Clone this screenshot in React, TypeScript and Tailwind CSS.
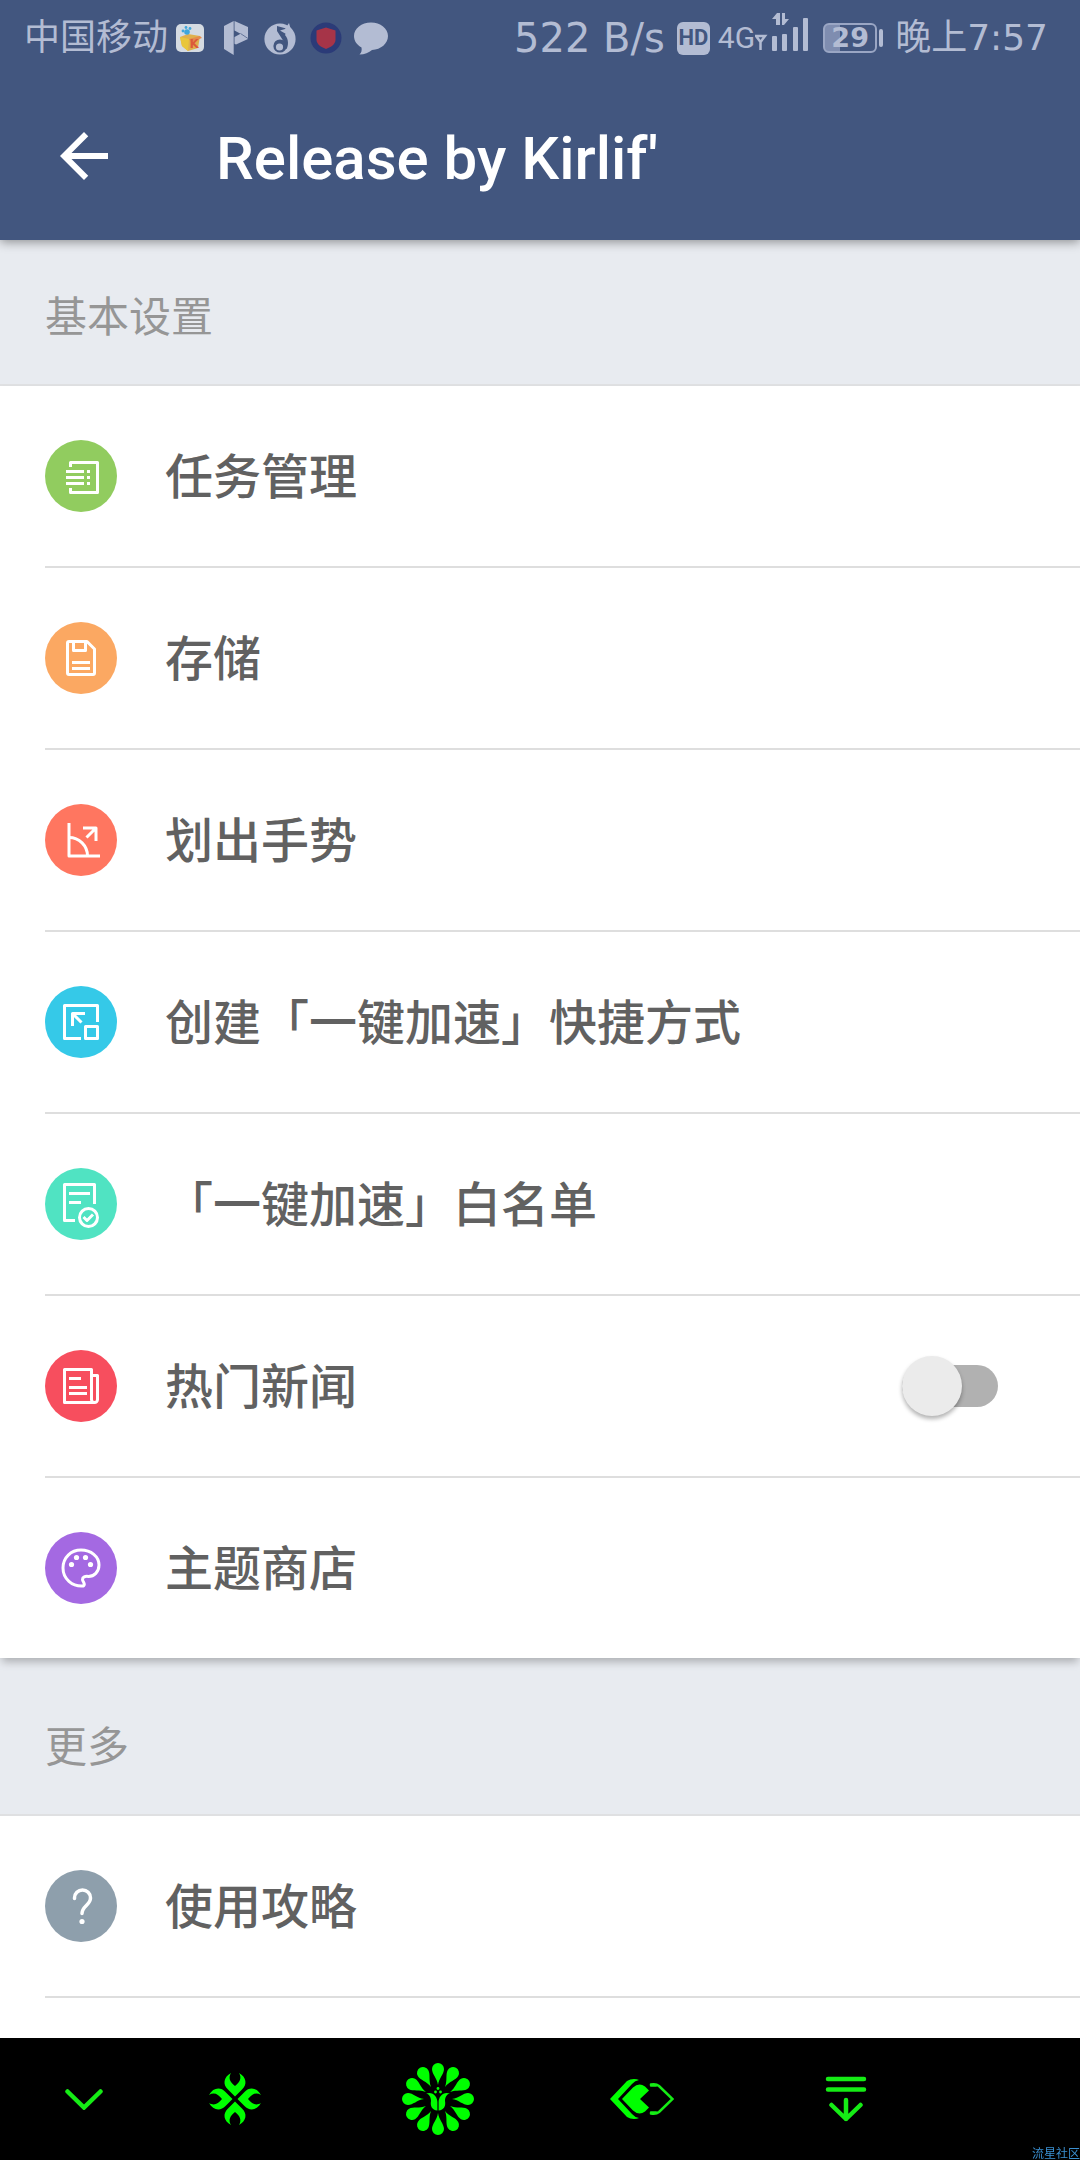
import clsx from 'clsx';
import { ReactNode, useState } from 'react';

type SettingItem = {
  id: string;
  name: string;
  color: string;
  icon: ReactNode;
  toggle?: boolean;
};

const basicItems: SettingItem[] = [
  {
    id: 'tasks',
    name: '任务管理',
    color: 'bg-[#91cc5f]',
    icon: (
      <>
        <path d="M25.5 27V22.5H52.5V52.5H25.5V48" />
        <path d="M21 31.5H39M21 37.5H39M21 43.5H39" />
        <path d="M42 31.5h3M42 37.5h3M42 43.5h3" />
      </>
    ),
  },
  {
    id: 'storage',
    name: '存储',
    color: 'bg-[#fba862]',
    icon: (
      <>
        <path d="M24 19.5H42L49.5 27V51a1.5 1.5 0 0 1-1.5 1.5H24a1.5 1.5 0 0 1-1.5-1.5V21a1.5 1.5 0 0 1 1.5-1.5Z" />
        <path d="M28.5 19.5V28.5H40.5V19.5" />
        <path d="M27 40.5H45M27 46.5H45" />
      </>
    ),
  },
  {
    id: 'gesture',
    name: '划出手势',
    color: 'bg-[#ff7660]',
    icon: (
      <>
        <path d="M24 19V52H55" />
        <path d="M24 33.5A18.5 18.5 0 0 1 42.5 52" />
        <path d="M38 24H51V37M51 24L41.5 33.5" />
      </>
    ),
  },
  {
    id: 'shortcut',
    name: '创建「一键加速」快捷方式',
    color: 'bg-[#35c9e8]',
    icon: (
      <>
        <path d="M52.5 36V19.5H19.5V52.5H36" />
        <path d="M40.5 40.5H52.5V52.5H40.5Z" />
        <path d="M40 27.5H27.5V40M27.5 27.5L36.5 36.5" />
      </>
    ),
  },
  {
    id: 'whitelist',
    name: '「一键加速」白名单',
    color: 'bg-[#50e3c2]',
    icon: (
      <>
        <path d="M49.5 36V16.5H19.5V52.5H30" />
        <path d="M24 25.5H45M24 34.5H36" />
        <circle cx="43.5" cy="49.5" r="9" />
        <path d="M38.5 49L42 52.5L48 46.5" />
      </>
    ),
  },
  {
    id: 'news',
    name: '热门新闻',
    color: 'bg-[#f74e5e]',
    toggle: true,
    icon: (
      <>
        <path d="M46.5 52.5H19.5V19.5H46.5V49.5a3 3 0 0 0 6 0V25.5H46.5" />
        <path d="M46 52.5H50" />
        <path d="M24 28.5H36M24 37.5H42M24 43.5H42" />
      </>
    ),
  },
  {
    id: 'themes',
    name: '主题商店',
    color: 'bg-[#a469e2]',
    icon: (
      <>
        <path d="M38.5 54C27 55 18 46.5 18 36C18 25.5 26 18 36 18C46 18 54 24.5 54 33C54 40 49 44.5 43.5 44.5C40 44 37.5 45 37.5 47.5C37.5 50 41 51.5 38.5 54Z" />
        <g fill="#fff" stroke="none">
          <circle cx="26.5" cy="32.5" r="2.6" />
          <circle cx="31.5" cy="25.5" r="2.6" />
          <circle cx="40.5" cy="25.5" r="2.6" />
          <circle cx="45.5" cy="32.5" r="2.6" />
        </g>
      </>
    ),
  },
];

const moreItems: SettingItem[] = [
  {
    id: 'guide',
    name: '使用攻略',
    color: 'bg-[#8e9fac]',
    icon: (
      <>
        <path d="M29.5 28.5V28a8 8 0 0 1 16 0C45.5 35 37 36 37 43.5" strokeWidth="3.5" />
        <circle cx="37" cy="51.5" r="2.6" fill="#fff" stroke="none" />
      </>
    ),
  },
];

function StatusBar() {
  return (
    <div className="flex h-[72px] items-center justify-between pt-1 pr-8 pl-6 text-[36px] leading-[48px] text-[#b3bcd3]">
      <div className="flex items-center">
        <span>中国移动</span>
        <svg className="ml-2 size-7" viewBox="0 0 28 28" aria-hidden="true">
          <rect width="28" height="28" rx="5" fill="#d5dbe2" />
          <path d="M4 13L12 10L24 12L22 24L12 27L6 22Z" fill="#dfb04c" />
          <path d="M4 13L13 15L12 27L6 22Z" fill="#e9c63b" />
          <path d="M13 15L24 12L26 14L15 18Z" fill="#e58b4c" />
          <circle cx="11" cy="8" r="2.8" fill="#3fa6da" />
          <circle cx="7" cy="7" r="1.4" fill="#3fa6da" />
          <circle cx="10" cy="3.5" r="1.4" fill="#3fa6da" />
          <circle cx="14" cy="4.5" r="1.4" fill="#3fa6da" />
          <text x="13.5" y="24" fontSize="12" fontWeight="700" fill="#dc5a3a">
            K
          </text>
        </svg>
        <svg className="ml-5 h-[34px] w-6" viewBox="0 0 24 34" fill="currentColor" aria-hidden="true">
          <path d="M0 5L9.7 0V34L0 28Z" />
          <path
            fillRule="evenodd"
            d="M10.5 0L24 6V18L12 23.5L10.5 22.8ZM10.5 9.5V16L16.5 12.8Z"
          />
          <path d="M16.5 12.5L24 17.5" fill="none" stroke="#42567f" strokeWidth=".7" />
        </svg>
        <svg className="ml-4 h-[33px] w-8" viewBox="0 0 32 33" aria-hidden="true">
          <circle cx="16" cy="17" r="15.6" fill="currentColor" />
          <path d="M13 4L24 7L21 13C25 17 24.5 24 22.5 27H19L20 20L13 9Z" fill="#42567f" />
          <circle cx="16" cy="24" r="6.6" fill="#42567f" />
          <circle cx="15.5" cy="25" r="3.6" fill="currentColor" />
          <path d="M16 8.5L21 7L25 1L27 8L22 12Z" fill="currentColor" />
        </svg>
        <svg className="ml-3.5 size-8" viewBox="0 0 32 32" aria-hidden="true">
          <circle cx="16" cy="16" r="15.5" fill="#2b3b78" />
          <path d="M16 5.5L25.5 8.5V18C25.5 22.5 20 25.5 16 27C12 25.5 6.5 22.5 6.5 18V8.5Z" fill="#a63448" />
        </svg>
        <svg className="ml-3 h-[33px] w-[34px]" viewBox="0 0 34 33" fill="currentColor" aria-hidden="true">
          <path d="M17 .5C26.5 .5 34 6.5 34 14C34 21.5 27 27.5 18 28C15 30.5 10.5 32.5 5.5 32.5C7.5 30.5 8 28.5 7.5 25.5C3 23 0 19 0 14C0 6.5 7.5 .5 17 .5Z" />
        </svg>
      </div>
      <div className="flex items-center">
        <span className="mr-3 text-[40px]">522 B/s</span>
        <span className="flex h-[33px] w-[33px] items-center justify-center rounded-md bg-[#b3bcd3] font-['Roboto',sans-serif] text-[22px] font-bold text-[#42567f]">
          HD
        </span>
        <span className="ml-2 font-['Roboto',sans-serif] text-[30px]">4G</span>
        <svg className="mb-3 h-10 w-[54px]" viewBox="0 0 54 40" fill="currentColor" aria-hidden="true">
          <path d="M1 24H10L5.5 30ZM5.5 29V38" fill="none" stroke="currentColor" strokeWidth="2.5" />
          <rect x="17" y="24" width="5" height="15" rx="1" />
          <rect x="27" y="22" width="5" height="17" rx="1" />
          <rect x="38" y="15" width="5" height="24" rx="1" />
          <rect x="48" y="6" width="5" height="33" rx="1" />
          <path d="M17 7L22 1H25V13H21V7ZM27 1H30V7H34L29 13H27Z" />
        </svg>
        <span className="ml-3.5 flex h-[30px] w-[54px] items-center justify-center rounded-md border-2 border-[#9aa6c4] bg-[linear-gradient(90deg,#7f8db0_30%,transparent_30%)] text-[27px] font-bold">
          29
        </span>
        <span className="mr-3 ml-0.5 h-[18px] w-1 rounded-sm bg-[#b3bcd3]" />
        <span>晚上7:57</span>
      </div>
    </div>
  );
}

function SectionTitle({ children }: { children: ReactNode }) {
  return (
    <h2 className="border-b-2 border-[#dfe0e2] pb-9 pl-[45px] text-[42px] leading-[60px] text-[#969696]">
      {children}
    </h2>
  );
}

function Row({ item, divided }: { item: SettingItem; divided: boolean }) {
  const [checked, setChecked] = useState(false);
  const content = (
    <>
      <svg
        className={clsx('size-[72px] shrink-0 rounded-full', item.color)}
        viewBox="0 0 72 72"
        fill="none"
        stroke="#fff"
        strokeWidth="3"
        strokeLinecap={item.id === 'guide' ? 'round' : 'butt'}
        strokeLinejoin="round"
        aria-hidden="true"
      >
        {item.icon}
      </svg>
      <span className="ml-12 flex-1 pt-0.5 text-left text-[48px] leading-[64px] font-medium text-[#616161]">
        {item.name}
      </span>
    </>
  );

  return (
    <li className={clsx('ml-[45px]', divided && 'border-b-2 border-[#dedede]')}>
      {item.toggle ? (
        <label className="flex h-[180px] items-center pr-[82px]">
          {content}
          <input
            type="checkbox"
            role="switch"
            checked={checked}
            onChange={(e) => setChecked(e.target.checked)}
            className="relative h-[42px] w-24 appearance-none rounded-full bg-[#b1b1b1] before:absolute before:-top-[9px] before:left-0 before:size-[60px] before:rounded-full before:bg-[#ebebeb] before:shadow-[0_3px_4px_rgba(0,0,0,0.3)] checked:before:left-9"
          />
        </label>
      ) : (
        <button type="button" className="flex h-[180px] w-full items-center">
          {content}
        </button>
      )}
    </li>
  );
}

const petals = [0, 90, 180, 270];
const drops = [0, 30, 60, 90, 120, 150, 180, 210, 240, 270, 300, 330];

function NavBar() {
  return (
    <nav className="sticky bottom-0 z-20 bg-black">
      <div className="grid h-[122px] grid-cols-[168fr_134fr_272fr_136fr_272fr_98fr] text-[#00ff00] [&>button]:flex [&>button]:items-center [&>button]:justify-center">
        <button type="button" aria-label="收起">
          <svg className="h-[21px] w-[38px]" viewBox="0 0 38 21" fill="none" stroke="#15ec15" strokeWidth="4.5" strokeLinecap="round">
            <path d="M2.5 2.5L19 18.5L35.5 2.5" />
          </svg>
        </button>
        <button type="button" aria-label="最近任务">
          <svg className="size-[52px]" viewBox="-26 -26 52 52" fill="currentColor">
            {petals.map((deg) => (
              <path
                key={deg}
                transform={`rotate(${deg})`}
                d="M0-2.5L-7-9.5C-12.5-14.5-11.5-22-4-26C-7-21-5-17 0-13C5-17 7-21 4-26C11.5-22 12.5-14.5 7-9.5Z"
              />
            ))}
          </svg>
        </button>
        <button type="button" aria-label="主屏幕">
          <svg className="size-[72px]" viewBox="-36 -36 72 72" fill="currentColor">
            {drops.map((deg) => (
              <path
                key={deg}
                transform={`rotate(${deg})`}
                d="M0-14C-1-21-6-25-6-30A6 6 0 0 1 6-30C6-25 1-21 0-14Z"
              />
            ))}
            <path d="M-12-5.5C-5-8-.6-2-.6 3V11.5C-6 11-8 7-7 2C-7-2-9-5-12-5.5Z" />
            <path d="M12-5.5C5-8 .6-2 .6 3V11.5C6 11 8 7 7 2C7-2 9-5 12-5.5Z" />
            <circle cy="-10.5" r="1.4" />
            <circle cx="-2.5" cy="-7" r="1.4" />
            <circle cx="2.5" cy="-7" r="1.4" />
          </svg>
        </button>
        <button type="button" aria-label="返回上一级">
          <svg className="h-10 w-16" viewBox="0 0 64 40" fill="currentColor">
            <path d="M0 20L17 2Q20 0 24 0Q27 0 29 1Q25 1.5 22 5L8 20L22 35Q25 38.5 29 39Q27 40 24 40Q20 40 17 38Z" />
            <path d="M12 20L23 8.5Q29 3 35 7.5L39 11.5L30 20L39 28.5L35 32.5Q29 37 23 31.5Z" />
            <path
              d="M41 5.5Q46 4.5 49 7L62.5 20L49 33Q46 35.5 41 34.5M41 6.5H46M41 33.5H46"
              fill="none"
              stroke="#15ec15"
              strokeWidth="2.5"
              strokeLinecap="round"
            />
          </svg>
        </button>
        <button type="button" aria-label="通知栏">
          <svg className="h-[46px] w-[42px]" viewBox="0 0 42 46" fill="none" stroke="#15ec15" strokeWidth="4.5" strokeLinecap="round" strokeLinejoin="round">
            <path d="M3 3H39M3 13.5H39M21 24V43M6.5 29L21 43L35.5 29" />
          </svg>
        </button>
      </div>
      <span className="absolute right-0 bottom-0 text-[12px] leading-3 whitespace-nowrap text-[#3a8fd0]">
        流星社区
      </span>
    </nav>
  );
}

export default function App() {
  return (
    <div className="flex min-h-screen flex-col bg-white font-['DejaVu_Sans','Noto_Sans_CJK_SC',sans-serif]">
      <header className="relative z-10 bg-[#42567f] shadow-[0_2px_10px_rgba(0,0,0,0.4)]">
        <StatusBar />
        <div className="flex h-[168px] items-center">
          <button type="button" aria-label="返回" className="ml-[60px] text-white">
            <svg className="size-12" viewBox="4 4 16 16" fill="currentColor">
              <path d="M20 11H7.83l5.59-5.59L12 4l-8 8 8 8 1.41-1.41L7.83 13H20v-2z" />
            </svg>
          </button>
          <h1 className="ml-[108px] pt-1.5 font-['Roboto',sans-serif] text-[60px] leading-[72px] font-medium text-white">
            Release by Kirlif'
          </h1>
        </div>
      </header>

      <main className="flex-1">
        <section className="bg-[#e8ebf0] pt-12">
          <SectionTitle>基本设置</SectionTitle>
          <ul className="relative bg-white shadow-[0_6px_8px_-2px_rgba(0,0,0,0.25)]">
            {basicItems.map((item, i) => (
              <Row key={item.id} item={item} divided={i < basicItems.length - 1} />
            ))}
          </ul>
        </section>
        <section className="bg-[#e8ebf0] pt-[60px]">
          <SectionTitle>更多</SectionTitle>
          <ul className="bg-white">
            {moreItems.map((item) => (
              <Row key={item.id} item={item} divided />
            ))}
          </ul>
        </section>
      </main>

      <NavBar />
    </div>
  );
}
